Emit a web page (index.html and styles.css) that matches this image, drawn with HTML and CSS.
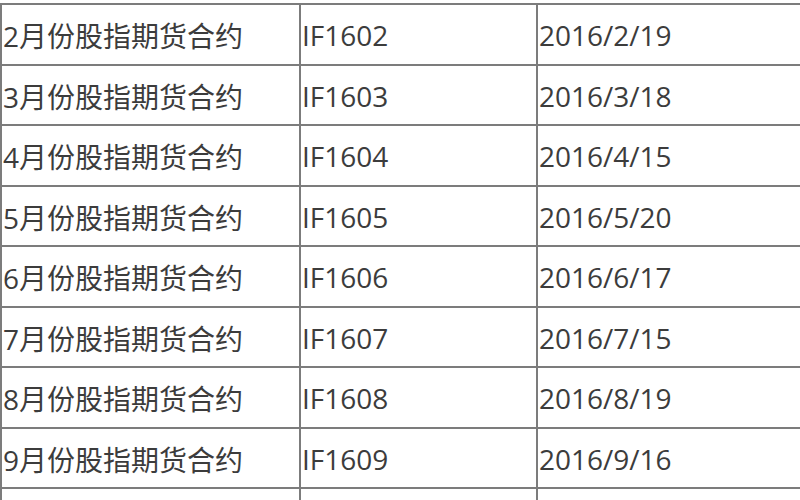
FILE: index.html
```html
<!DOCTYPE html>
<html lang="zh">
<head>
<meta charset="utf-8">
<link rel="stylesheet" href="styles.css">
</head>
<body>
<div class="sheet">
  <div class="grid">
    <div class="cell">2月份股指期货合约</div><div class="cell">IF1602</div><div class="cell">2016/2/19</div>
    <div class="cell">3月份股指期货合约</div><div class="cell">IF1603</div><div class="cell">2016/3/18</div>
    <div class="cell">4月份股指期货合约</div><div class="cell">IF1604</div><div class="cell">2016/4/15</div>
    <div class="cell">5月份股指期货合约</div><div class="cell">IF1605</div><div class="cell">2016/5/20</div>
    <div class="cell">6月份股指期货合约</div><div class="cell">IF1606</div><div class="cell">2016/6/17</div>
    <div class="cell">7月份股指期货合约</div><div class="cell">IF1607</div><div class="cell">2016/7/15</div>
    <div class="cell">8月份股指期货合约</div><div class="cell">IF1608</div><div class="cell">2016/8/19</div>
    <div class="cell">9月份股指期货合约</div><div class="cell">IF1609</div><div class="cell">2016/9/16</div>
    <div class="cell"></div><div class="cell"></div><div class="cell"></div>
  </div>
</div>
</body>
</html>
```
FILE: styles.css
```css
html, body {
  margin: 0;
  padding: 0;
  background: #ffffff;
  overflow: hidden;
  width: 800px;
  height: 500px;
}
.sheet {
  padding-top: 3px;
  width: 800px;
  height: 497px;
  overflow: hidden;
}
.grid {
  display: grid;
  grid-template-columns: 297px 235px 1fr;
  grid-auto-rows: 58.5px;
  gap: 2px;
  padding: 2px 0 0 2px;
  background: #7c7c7c;
}
.cell {
  background: #ffffff;
  display: flex;
  align-items: center;
  padding-left: 1px;
  padding-top: 2px;
  box-sizing: border-box;
  font-family: "Open Sans", "Noto Sans CJK SC", sans-serif;
  font-size: 28px;
  color: #3c3c3c;
  white-space: nowrap;
}
```
